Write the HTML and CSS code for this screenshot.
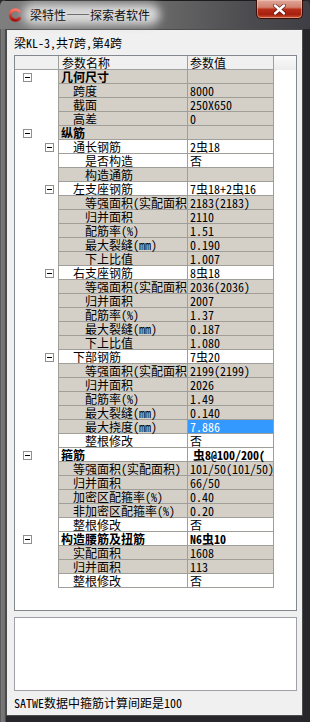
FILE: index.html
```html
<!DOCTYPE html>
<html lang="zh-CN">
<head>
<meta charset="utf-8">
<title>梁特性——探索者软件</title>
<link rel="stylesheet" href="styles.css">
</head>
<body>
<div class="win">
  <div class="tb">
    <svg class="ico" width="14" height="14" viewBox="0 0 14 14">
      <defs>
        <linearGradient id="rg" x1="0" y1="0" x2="0" y2="1">
          <stop offset="0" stop-color="#ff7262"/>
          <stop offset="1" stop-color="#a8100a"/>
        </linearGradient>
      </defs>
      <path d="M11.2 3.3 A5.2 5.2 0 1 0 11.6 10.2" fill="none" stroke="url(#rg)" stroke-width="3.2" stroke-linecap="round"/>
      <path d="M9.6 4.6 A3 3 0 1 0 9.8 9" fill="none" stroke="#7a7a7a" stroke-width="0.8"/>
    </svg>
    <span class="tt">梁特性——探索者软件</span>
    <div class="cls">
      <svg width="13" height="11" viewBox="0 0 13 11">
        <path d="M2 1.5 L11 9.5 M11 1.5 L2 9.5" stroke="#4a0c06" stroke-opacity=".7" stroke-width="4" stroke-linecap="round"/>
        <path d="M2 1.5 L11 9.5 M11 1.5 L2 9.5" stroke="#fff" stroke-width="2.4" stroke-linecap="round"/>
      </svg>
    </div>
  </div>
  <div class="cl">
    <div class="cap">梁KL-3,共7跨,第4跨</div>
    <div class="pn">
      <div class="r hd"><div class="g"></div><div class="n">参数名称</div><div class="v">参数值</div><div class="x"></div></div>

      <div class="r ro"><div class="g g1"><i class="mb"></i></div><div class="n l1">几何尺寸</div><div class="v"></div><div class="x"></div></div>
      <div class="r ro"><div class="g"></div><div class="n l2">跨度</div><div class="v">8000</div><div class="x"></div></div>
      <div class="r ro"><div class="g"></div><div class="n l2">截面</div><div class="v">250X650</div><div class="x"></div></div>
      <div class="r ro"><div class="g"></div><div class="n l2">高差</div><div class="v">0</div><div class="x"></div></div>
      <div class="r ro"><div class="g g1"><i class="mb"></i></div><div class="n l1">纵筋</div><div class="v"></div><div class="x"></div></div>
      <div class="r"><div class="g g2"><i class="mb"></i></div><div class="n l2">通长钢筋</div><div class="v">2虫18</div><div class="x"></div></div>
      <div class="r"><div class="g"></div><div class="n l3">是否构造</div><div class="v">否</div><div class="x"></div></div>
      <div class="r ro"><div class="g"></div><div class="n l3">构造通筋</div><div class="v"></div><div class="x"></div></div>

      <div class="r"><div class="g g2"><i class="mb"></i></div><div class="n l2">左支座钢筋</div><div class="v">7虫18+2虫16</div><div class="x"></div></div>
      <div class="r ro"><div class="g"></div><div class="n l3">等强面积(实配面积</div><div class="v">2183(2183)</div><div class="x"></div></div>
      <div class="r ro"><div class="g"></div><div class="n l3">归并面积</div><div class="v">2110</div><div class="x"></div></div>
      <div class="r ro"><div class="g"></div><div class="n l3">配筋率(%)</div><div class="v">1.51</div><div class="x"></div></div>
      <div class="r ro"><div class="g"></div><div class="n l3">最大裂缝(mm)</div><div class="v">0.190</div><div class="x"></div></div>
      <div class="r ro"><div class="g"></div><div class="n l3">下上比值</div><div class="v">1.007</div><div class="x"></div></div>

      <div class="r"><div class="g g2"><i class="mb"></i></div><div class="n l2">右支座钢筋</div><div class="v">8虫18</div><div class="x"></div></div>
      <div class="r ro"><div class="g"></div><div class="n l3">等强面积(实配面积</div><div class="v">2036(2036)</div><div class="x"></div></div>
      <div class="r ro"><div class="g"></div><div class="n l3">归并面积</div><div class="v">2007</div><div class="x"></div></div>
      <div class="r ro"><div class="g"></div><div class="n l3">配筋率(%)</div><div class="v">1.37</div><div class="x"></div></div>
      <div class="r ro"><div class="g"></div><div class="n l3">最大裂缝(mm)</div><div class="v">0.187</div><div class="x"></div></div>
      <div class="r ro"><div class="g"></div><div class="n l3">下上比值</div><div class="v">1.080</div><div class="x"></div></div>

      <div class="r"><div class="g g2"><i class="mb"></i></div><div class="n l2">下部钢筋</div><div class="v">7虫20</div><div class="x"></div></div>
      <div class="r ro"><div class="g"></div><div class="n l3">等强面积(实配面积</div><div class="v">2199(2199)</div><div class="x"></div></div>
      <div class="r ro"><div class="g"></div><div class="n l3">归并面积</div><div class="v">2026</div><div class="x"></div></div>
      <div class="r ro"><div class="g"></div><div class="n l3">配筋率(%)</div><div class="v">1.49</div><div class="x"></div></div>
      <div class="r ro"><div class="g"></div><div class="n l3">最大裂缝(mm)</div><div class="v">0.140</div><div class="x"></div></div>
      <div class="r ro"><div class="g"></div><div class="n l3">最大挠度(mm)</div><div class="v sel">7.886</div><div class="x"></div></div>
      <div class="r"><div class="g"></div><div class="n l3">整根修改</div><div class="v">否</div><div class="x"></div></div>

      <div class="r"><div class="g g1"><i class="mb"></i></div><div class="n l1">箍筋</div><div class="v vb vi">虫8@100/200(</div><div class="x"></div></div>
      <div class="r ro"><div class="g"></div><div class="n l2">等强面积(实配面积)</div><div class="v">101/50(101/50)</div><div class="x"></div></div>
      <div class="r ro"><div class="g"></div><div class="n l2">归并面积</div><div class="v">66/50</div><div class="x"></div></div>
      <div class="r ro"><div class="g"></div><div class="n l2">加密区配箍率(%)</div><div class="v">0.40</div><div class="x"></div></div>
      <div class="r ro"><div class="g"></div><div class="n l2">非加密区配箍率(%)</div><div class="v">0.20</div><div class="x"></div></div>
      <div class="r"><div class="g"></div><div class="n l2">整根修改</div><div class="v">否</div><div class="x"></div></div>

      <div class="r"><div class="g g1"><i class="mb"></i></div><div class="n l1">构造腰筋及扭筋</div><div class="v vb">N6虫10</div><div class="x"></div></div>
      <div class="r ro"><div class="g"></div><div class="n l2">实配面积</div><div class="v">1608</div><div class="x"></div></div>
      <div class="r ro"><div class="g"></div><div class="n l2">归并面积</div><div class="v">113</div><div class="x"></div></div>
      <div class="r"><div class="g"></div><div class="n l2">整根修改</div><div class="v">否</div><div class="x"></div></div>
    </div>
    <div class="msg"></div>
    <div class="st">SATWE数据中箍筋计算间距是100</div>
  </div>
</div>
</body>
</html>
```
FILE: styles.css
```css
* { box-sizing: border-box; margin: 0; padding: 0; }
html, body { width: 310px; height: 722px; overflow: hidden; }
body {
  background: #2a2a2a;
  font-family: "Noto Sans Mono CJK SC", "Noto Sans CJK SC", "Noto Sans CJK JP", sans-serif;
  font-size: 12px;
  color: #000;
}
.win {
  width: 310px;
  height: 722px;
  display: flex;
  flex-direction: column;
  background: linear-gradient(to right, #3a3a3a 0, #7a7a7a 1px, #707070 5px, #26262b 6px, #26262b 100%);
  border-radius: 6px 6px 0 0;
  overflow: hidden;
}
/* title bar */
.tb {
  height: 29px;
  flex: none;
  display: flex;
  align-items: flex-start;
  background: linear-gradient(to right, #7e7e7e 0, #787878 20%, #656565 55%, #4c4c50 80%, #3e3e44 100%);
  box-shadow: inset 0 1px 0 #1c1c1c;
}
.ico { margin: 8px 0 0 8px; flex: none; }
.tt {
  position: relative;
  z-index: 0;
  margin-left: -4px;
  padding: 0 14px 0 12px;
  height: 29px;
  line-height: 29px;
  color: #111;
  white-space: nowrap;
}
.tt::before {
  content: "";
  position: absolute;
  left: 5px; right: 4px; top: 4px; bottom: 4px;
  background: #dadada;
  border-radius: 10px;
  filter: blur(5px);
  z-index: -1;
}
.cls {
  margin-left: auto;
  margin-right: 7px;
  width: 47px;
  height: 19px;
  flex: none;
  border: 1px solid #3c0e08;
  border-top: 0;
  border-radius: 0 0 5px 5px;
  background: linear-gradient(#dea69b 0%, #d2826f 40%, #b72f19 52%, #a6200e 80%, #cf5630 100%);
  box-shadow: inset 0 0 0 1px rgba(255, 215, 205, .45);
  display: flex;
  align-items: center;
  justify-content: center;
}
/* client */
.cl {
  flex: 1;
  margin: 0 7px 7px 6px;
  background: #f0f0f0;
  border: 1px solid #4c4c4c;
  padding: 0 5px 0 7px;
  display: flex;
  flex-direction: column;
}
.cap { height: 25px; line-height: 25px; flex: none; white-space: nowrap; }
.pn {
  height: 556px;
  flex: none;
  border: 1px solid #828790;
  background: #fff;
}
.msg {
  height: 74px;
  margin-top: 6px;
  flex: none;
  border: 1px solid #9ea1a8;
  background: #fff;
}
.st { flex: 1; line-height: 24px; white-space: nowrap; }

/* property grid */
.r { display: flex; height: 14px; }
.g { width: 43px; flex: none; display: flex; align-items: center; }
.g1 { padding-left: 8px; }
.g2 { padding-left: 30px; }
.mb {
  display: block;
  width: 9px;
  height: 9px;
  border: 1px solid #8f8f8f;
  background: #fff;
  position: relative;
}
.mb::after {
  content: "";
  position: absolute;
  left: 1px; top: 3px;
  width: 5px; height: 1px;
  background: #000;
}
.n, .v {
  flex: none;
  line-height: 13px;
  white-space: nowrap;
  border-left: 1px solid #a09e98;
  border-bottom: 1px solid #a09e98;
}
.n { width: 129px; }
.v { width: 87px; padding-left: 2px; border-right: 1px solid #a09e98; }
.x { flex: 1; }
.l1 { padding-left: 2px; font-weight: bold; }
.l2 { padding-left: 14px; }
.l3 { padding-left: 26px; }
.vb { font-weight: bold; }
.vi { padding-left: 5px; }
.ro .n, .ro .v { background: #d4d0c8; }
.ro .v.sel, .v.sel { background: #3399ff; color: #fff; }

.hd .g, .hd .n, .hd .v {
  background: #f0f0f0;
  border-bottom: 1px solid #a0a0a0;
}
.hd .n { padding-left: 3px; }
.hd .x { background: linear-gradient(#fafafa, #ececec); }
```
